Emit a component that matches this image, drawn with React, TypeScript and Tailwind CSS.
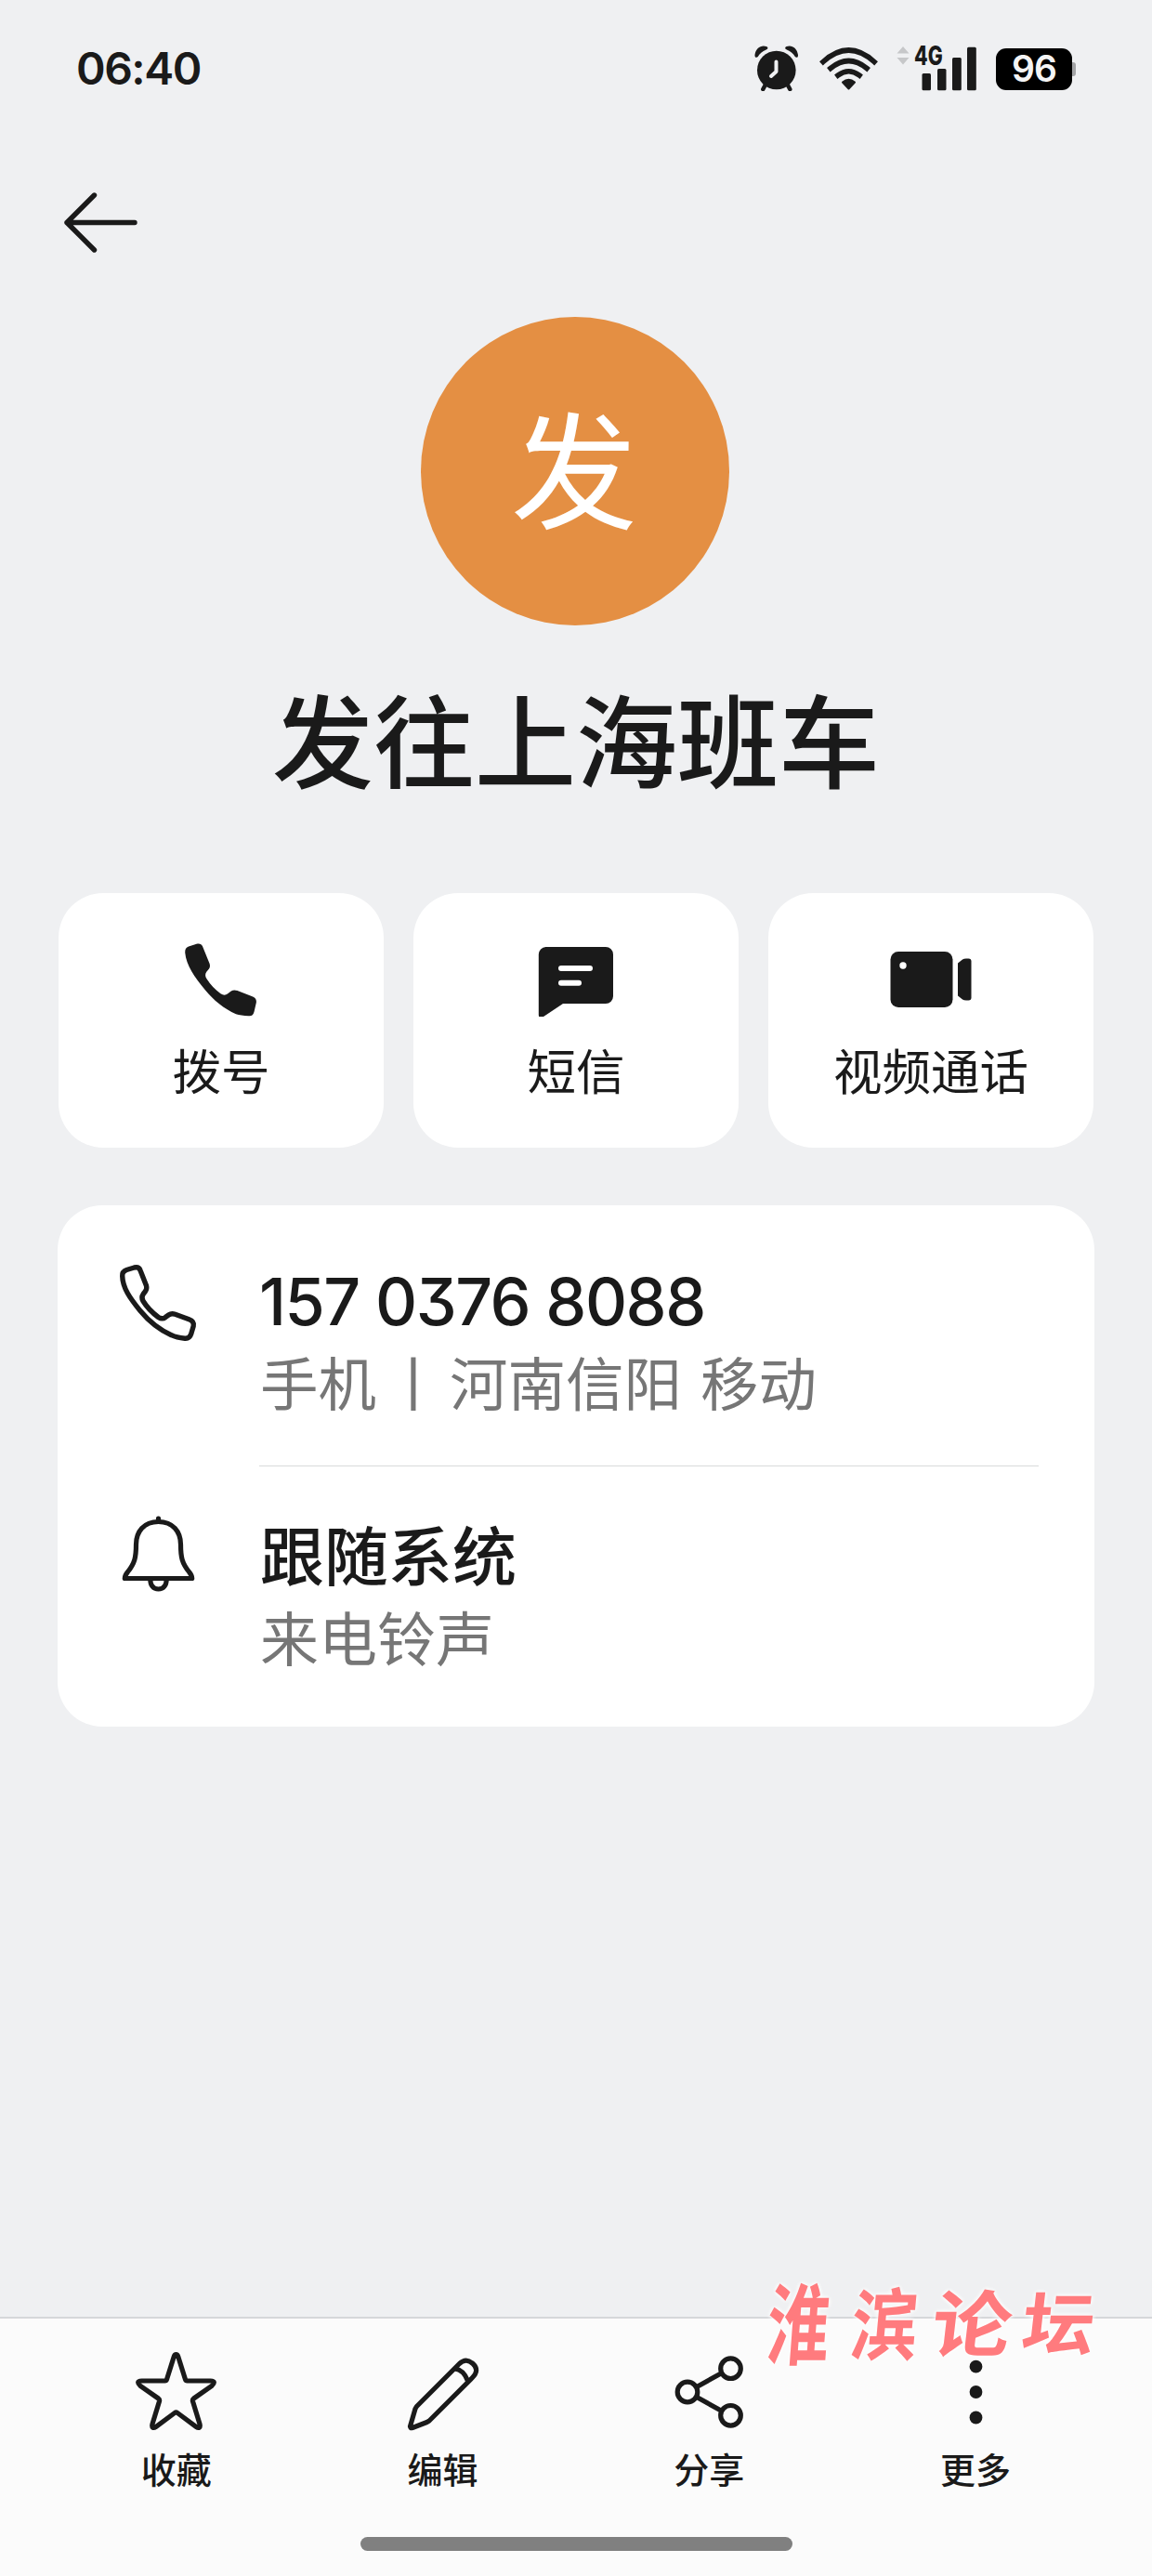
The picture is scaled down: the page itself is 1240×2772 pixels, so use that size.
import React from "react";

const CJK = "font-['Noto_Sans_CJK_SC',sans-serif]";
const INTER = "font-['Inter','Noto_Sans_CJK_SC',sans-serif]";

function StatusIcons() {
  return (
    <div className="flex items-start">
      <svg className="mt-[48px] h-[50px] w-[48px]" viewBox="0 0 48 50" fill="#1a1a1a">
        <circle cx="23.8" cy="27.5" r="20.8" />
        <path d="M0.500 11C1.500 4 7 0 13 2c2 .7 2 2.500-.3 3.600C8.500 7.600 5.500 10 3.800 13 2.500 14.500.2 14 .5 11Z" />
        <path d="M47 11C46 4 40.600 0 34.600 2c-2 .7-2 2.500.3 3.600 4.200 2 7.200 4.400 8.900 7.400 1.300 1.500 3.500 1 3.200-2Z" />
        <path d="M12 43 9.300 48M35.600 43l2.700 5" stroke="#1a1a1a" strokeWidth="4.500" strokeLinecap="round" />
        <path d="M23.500 18.500v10.500l-5.500 5" fill="none" stroke="#eff0f2" strokeWidth="4" strokeLinecap="round" strokeLinejoin="round" />
      </svg>
      <svg className="ml-[22px] mt-[50px] h-[48px] w-[64px]" viewBox="0 0 64 48" fill="none" stroke="#1a1a1a" strokeWidth="5.600" strokeLinecap="square">
        <path d="M4 16.500Q31.500-8.500 59 16.500" />
        <path d="M12 23.500Q31.500 7.500 51 23.500" />
        <path d="M20 31Q31.500 22.500 43 31" />
        <path d="M25 38.500Q31.500 33 38 38.500L31.500 45.500Z" fill="#1a1a1a" strokeWidth="2" strokeLinejoin="round" />
      </svg>
      <svg className="ml-[19px] mt-[50px] h-[20px] w-[14px]" viewBox="0 0 14 20" fill="#c6c7c9">
        <path d="M7 0 13.500 7.500H.5ZM7 19.500.5 12h13Z" />
      </svg>
      <div className="relative ml-[5px] mt-[50px] h-[48px] w-[68px]">
        <svg className="h-full w-full" viewBox="0 0 68 48" fill="#1a1a1a">
          <rect x="8.500" y="29" width="9.500" height="18.300" rx="1.500" />
          <rect x="25" y="24" width="9.500" height="23.300" rx="1.500" />
          <rect x="41" y="12" width="9.800" height="35.300" rx="1.500" />
          <rect x="57" y="0.800" width="9.800" height="46.500" rx="1.500" />
        </svg>
        <span className="absolute left-0 top-0 origin-left scale-x-[0.76] font-['Inter',sans-serif] text-[28px] font-extrabold leading-[20px] text-[#1a1a1a]">4G</span>
      </div>
      <div className="ml-[20px] mt-[52px] flex items-center">
        <div className="flex h-[45px] w-[82px] items-center justify-center rounded-[11px] bg-black font-['Inter',sans-serif] text-[39px] font-semibold tracking-[-1px] text-[#f4f4f4]">96</div>
        <div className="h-[15px] w-[4px] rounded-r-[3px] bg-[#a3a4a6]" />
      </div>
    </div>
  );
}

function PhoneFilled() {
  return (
    <svg className="h-[80px] w-[80px]" viewBox="0 0 80 80" fill="#1a1a1a">
      <path d="M1.200 11C1.200 7.500 2.200 5.800 5 4.600L13.500 1.800C17.500 1 19.300 2.200 20.300 5L27.600 23C28.300 25.500 28 27.300 26.800 28.800L24.300 31.800C22.600 34 22.800 36.500 24.300 39 28.500 45.500 33.500 51 39.500 55.300 42.500 57.200 45 57 47.200 55.200L50.800 52.500C52.800 51.200 55 51.200 57.500 52L73.500 58.200C77.200 59.700 78.300 61.800 77.800 65L75.600 74.500C74.600 78.300 72.800 79.600 69.500 79.200 64 78.700 59.500 78.600 56 77.200 43 71.500 32 62.500 23 51.500 11.500 37.500 2.500 25 1.200 11Z" />
    </svg>
  );
}

function MessageIcon() {
  return (
    <svg className="h-[80px] w-[82px]" viewBox="0 0 82 80">
      <path d="M8.500 5H73a8 8 0 0 1 8 8v45a8 8 0 0 1-8 8H27L6 80Q1 83 .8 78V13a8 8 0 0 1 7.700-8Z" fill="#1a1a1a" />
      <path d="M25 28h31M25 43.800h19" stroke="#fff" strokeWidth="6" strokeLinecap="round" />
    </svg>
  );
}

function VideoIcon() {
  return (
    <svg className="h-[80px] w-[88px]" viewBox="0 0 88 80" fill="#1a1a1a">
      <rect x="0.500" y="10" width="67" height="60" rx="8.500" />
      <circle cx="14" cy="25" r="3.700" fill="#fff" />
      <path d="M73 22.500 78 18.500Q79.500 17.500 82 17.500h2.500a3 3 0 0 1 3 3v39a3 3 0 0 1-3 3H82Q79.500 62.500 78 61.500L73 57.500Z" />
    </svg>
  );
}

const actions = [
  { label: "拨号", icon: <PhoneFilled /> },
  { label: "短信", icon: <MessageIcon /> },
  { label: "视频通话", icon: <VideoIcon /> },
];

function PhoneOutline() {
  return (
    <svg className="h-[86px] w-[86px]" viewBox="0 0 86 86" fill="none" stroke="#1a1a1a" strokeWidth="5.400" strokeLinejoin="round">
      <path d="M4.700 14C4.500 10.500 6 8.700 9.300 7.500L17.500 5C21 4.200 23 5.200 24 8L30.500 24.500C31.200 27 30.900 28.500 29.500 30.500L27.200 33.500C25.500 36 25.500 38.500 27 41 31 47.500 37 53.700 43.500 58.500 46.500 60.500 49 60.200 51.300 58.300L54.500 56C57 54.200 58.500 54.200 61.500 55.300L76.500 60.800C80.500 62.300 82 64.500 81.200 68L78.700 76.500C77.500 80.300 75.500 81.500 72 81.200 66 80.700 62 80 57.500 77.700 44 71.700 33 62.500 23.500 51 13 38 5 27 4.700 14Z" />
    </svg>
  );
}

function BellIcon() {
  return (
    <svg className="h-[86px] w-[86px]" viewBox="0 0 86 86" fill="none" stroke="#1a1a1a" strokeWidth="5.200" strokeLinejoin="round" strokeLinecap="round">
      <path d="M43.500 5V8M43.500 8.500C28 8.500 19.500 19 19.500 33 19.500 47 18 53 10.500 62.500 8 65.500 7.300 67.500 7.300 69.500H79.700C79.700 67.500 79 65.500 76.500 62.500 69 53 67.500 47 67.500 33 67.500 19 59 8.500 43.500 8.500Z" />
      <path d="M34.800 70.500C34.800 77 38 81 43.500 81S52.200 77 52.200 70.500" />
    </svg>
  );
}

const toolbar = [
  {
    label: "收藏",
    icon: (
      <path d="M43.500 4.500Q45 4.500 45.700 6.700L53.500 31.500Q54 33 55.500 33H80.500Q84 33 84.300 34.500 84.500 36 82 38.300L62.500 52Q61 53.200 61.500 55L69 79.500Q69.700 82.500 68.500 83.300 67.300 84 65 82.300L45 67.500Q43.500 66.400 42 67.500L22 82.300Q19.700 84 18.500 83.300 17.300 82.500 18 79.500L25.500 55Q26 53.200 24.500 52L5 38.300Q2.500 36 2.700 34.500 3 33 6.500 33H31.500Q33 33 33.500 31.500L41.300 6.700Q42 4.500 43.500 4.500Z" />
    ),
  },
  {
    label: "编辑",
    icon: (
      <>
        <path d="M8.500 82Q9 84 11 83.500L26.500 77.500 29 76 75.500 29.500Q83.500 21.500 76 14.500 68.500 7.500 61 15L15.500 60.500 14 63Z" />
        <path d="M56.500 20Q66 21 70.500 33" />
      </>
    ),
  },
  {
    label: "分享",
    icon: (
      <>
        <circle cx="20" cy="45" r="10.800" />
        <circle cx="66.500" cy="19.700" r="10.800" />
        <circle cx="66.500" cy="70.300" r="10.800" />
        <path d="M30 39.500 57 24.500M30 50.500 57 65.500" />
      </>
    ),
  },
  {
    label: "更多",
    icon: (
      <g fill="#1a1a1a" stroke="none">
        <circle cx="43.500" cy="17.700" r="6.900" />
        <circle cx="43.500" cy="45" r="6.900" />
        <circle cx="43.500" cy="72.500" r="6.900" />
      </g>
    ),
  },
];

export default function App() {
  return (
    <div className={`relative flex h-[2772px] w-[1240px] flex-col overflow-hidden bg-[#eff0f2] text-[#1a1a1a] ${CJK}`}>
      <header className="flex h-[140px] items-start justify-between pl-[82px] pr-[82px]">
        <div className={`mt-[50px] text-[48px] font-semibold leading-[48px] tracking-[-1.500px] ${INTER}`}>06:40</div>
        <StatusIcons />
      </header>

      <nav className="h-[201px] pl-[66px] pt-[66px]">
        <svg className="h-[66px] w-[84px]" viewBox="0 0 84 66" fill="none" stroke="#1a1a1a" strokeWidth="5.400" strokeLinecap="round" strokeLinejoin="round">
          <path d="M79 33.500H6M35.500 4 6 33.500 35.500 63" />
        </svg>
      </nav>

      <section className="flex h-[620px] flex-col items-center">
        <div className="mr-[2px] flex h-[332px] w-[332px] items-center justify-center rounded-full bg-[#e48f43] pb-[14px] pr-[2px] text-[136px] leading-[136px] text-white">发</div>
        <h1 className="mt-[54px] whitespace-nowrap text-[109px] font-medium leading-[132px]">发往上海班车</h1>
      </section>

      <section className="grid grid-cols-3 gap-[32px] px-[63px]">
        {actions.map((a) => (
          <button key={a.label} className="flex h-[274px] flex-col items-center rounded-[48px] bg-white pt-[53px]">
            {a.icon}
            <span className="mt-[24px] text-[52.500px] leading-[64px]">{a.label}</span>
          </button>
        ))}
      </section>

      <section className="mx-[62px] mt-[62px] flex h-[561px] flex-col rounded-[48px] bg-white">
        <div className="flex h-[280px] pl-[65px]">
          <div className="mt-[62px] w-[153px]">
            <PhoneOutline />
          </div>
          <div>
            <div className={`-ml-px mt-[66px] whitespace-nowrap text-[70px] font-medium leading-[76px] tracking-[-1.500px] [font-feature-settings:'cv09'] ${INTER}`}>157 0376 8088</div>
            <div className="mt-[11px] flex whitespace-nowrap text-[62.500px] leading-[72px] text-[#767676]">
              <span>手机</span>
              <span className="flex w-[80px] justify-center">丨</span>
              <span className="-ml-px [word-spacing:6px]">河南信阳 移动</span>
            </div>
          </div>
        </div>
        <div className="ml-[217px] mr-[60px] h-px bg-[#d9dadb]" />
        <div className="flex h-[280px] pl-[65px]">
          <div className="mt-[51px] w-[153px]">
            <BellIcon />
          </div>
          <div>
            <div className="mt-[53px] text-[69px] font-medium leading-[80px]">跟随系统</div>
            <div className="mt-[13px] text-[63px] leading-[72px] text-[#767676]">来电铃声</div>
          </div>
        </div>
      </section>

      <footer className="mt-auto flex h-[279px] flex-col items-center border-t-2 border-[#d6d7da] bg-[#fbfbfb]">
        <div className="grid w-[1147px] grid-cols-4">
          {toolbar.map((t) => (
            <button key={t.label} className="flex flex-col items-center pt-[34px]">
              <svg className="h-[88px] w-[87px]" viewBox="0 0 87 88" fill="none" stroke="#1a1a1a" strokeWidth="5.200" strokeLinejoin="round">
                {t.icon}
              </svg>
              <span className="mt-[15px] text-[38px] font-medium leading-[48px]">{t.label}</span>
            </button>
          ))}
        </div>
        <div className="mt-[50px] h-[15px] w-[465px] rounded-full bg-[#808080]" />
      </footer>

      <div className="absolute left-[821px] top-[2451px] flex w-[358px] justify-between text-[78px] font-bold leading-[90px] text-[#ff7b7e] [text-shadow:0_0_5px_#fff,0_0_5px_#fff]">
        <span className="-skew-x-6 scale-x-[0.86] scale-y-[1.22]">淮</span>
        <span className="-skew-x-6 scale-x-[0.92] scale-y-[1.08]">滨</span>
        <span className="-skew-x-6 scale-x-[1.1]">论</span>
        <span className="-skew-x-6 scale-y-[0.94]">坛</span>
      </div>
    </div>
  );
}
